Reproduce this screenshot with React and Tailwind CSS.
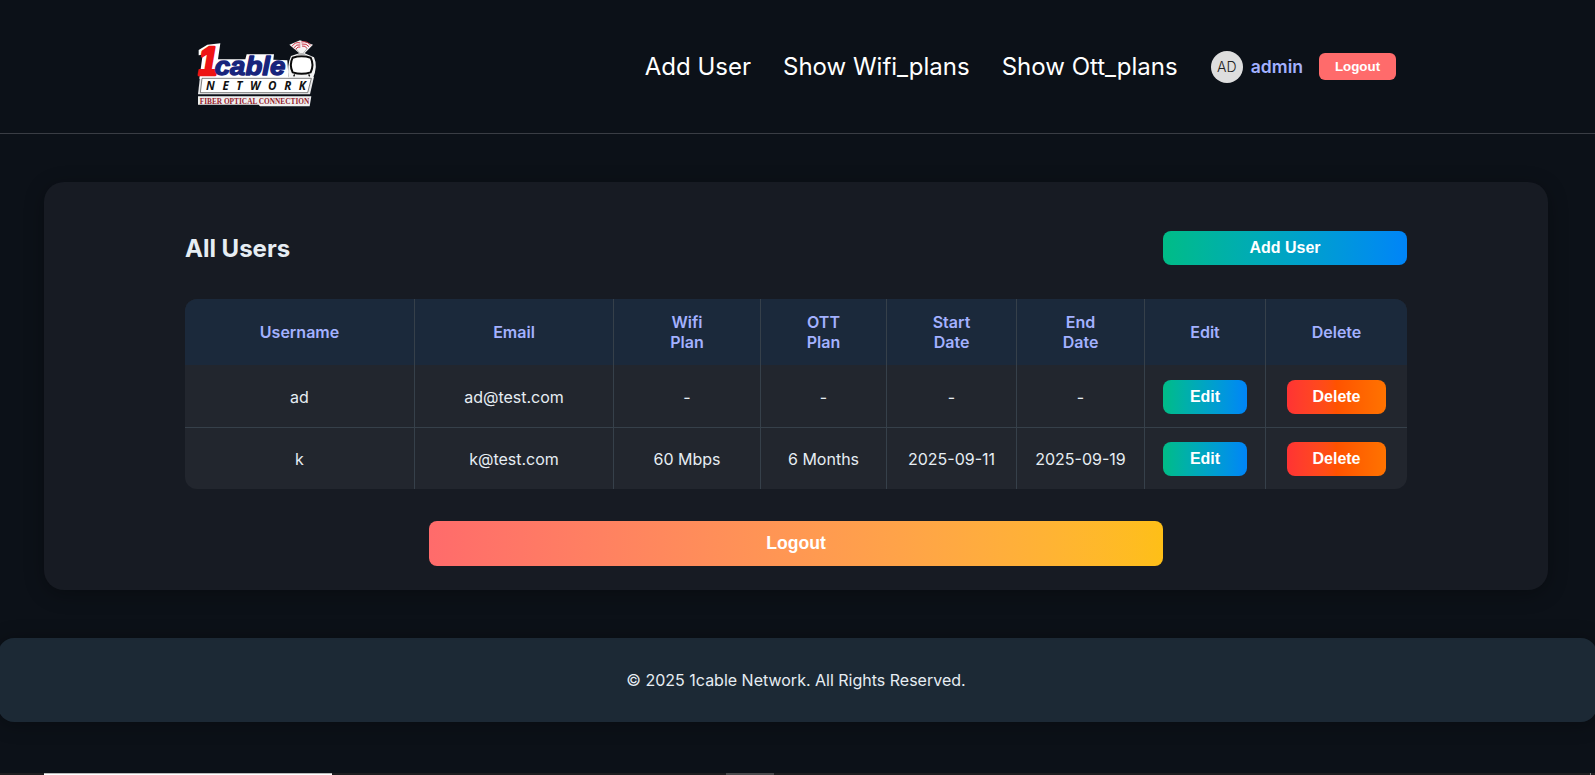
function Logo() {
  return (
    <svg className="block h-[90px] w-[150px] shrink-0" viewBox="0 0 450 270" role="img" aria-label="1cable Network">
      <path d="M60 140 H402 L390 193 H54 Z" fill="#e9e9ea" />
      <path d="M56 60 L82 44 L121 40 L114 88 L196 88 L200 73 L282 73 L280 89 L322 91 L326 146 H58 L68 74 L56 76 Z" fill="#fff" />
      <path d="M333 78 Q320 106 326 146 H398 Q415 110 402 82 L374 70 L399 44 L360 31 L328 44 L358 70 Z" fill="#f4f4f4" />
      <path d="M54 199 H394 L389 229 H240 L236 224 H54 Z" fill="#efefef" />
      <path d="M66 145 H394 L383 188 H61 Z" fill="#fff" stroke="#444" strokeWidth="2" />
      <g fontFamily="Liberation Sans, Arial, sans-serif" fontStyle="italic" fontWeight="700" strokeLinejoin="round">
        <text x="54" y="136" fontSize="121" textLength="60" lengthAdjust="spacingAndGlyphs" fill="#ee1414" stroke="#ee1414" strokeWidth="8">1</text>
        <text x="104" y="136" fontSize="78" textLength="212" lengthAdjust="spacingAndGlyphs" fill="#18247c" stroke="#18247c" strokeWidth="4">cable</text>
      </g>
      <text x="78" y="180" fontFamily="Open Sans, sans-serif" fontStyle="italic" fontWeight="700" fontSize="35" textLength="300" fill="#111">NETWORK</text>
      <text x="59" y="221" fontFamily="Liberation Serif, serif" fontWeight="700" fontSize="23" textLength="329" lengthAdjust="spacingAndGlyphs" fill="#96202b">FIBER OPTICAL CONNECTION</text>
      <path d="M338 83 Q365 75 392 83 Q403 105 392 127 Q365 136 338 127 Q327 105 338 83 Z" fill="#fff" stroke="#0a0a0a" strokeWidth="6" />
      <path d="M344 133 l-3 6 M386 133 l3 6" stroke="#111" strokeWidth="4" />
      <path d="M363 74 L347 56 M366 74 L383 54" stroke="#999" strokeWidth="2" />
      <path d="M350 76 Q364 62 379 76 Z" fill="#b5b5b5" />
      <path d="M336 49 Q346 34 361 39 M341 54 Q350 41 361 45 M347 58 Q354 48 361 51 M364 36 Q382 32 392 46 M365 42 Q380 40 387 50 M366 48 Q376 47 381 55" fill="none" stroke="#cf3344" strokeWidth="3" />
    </svg>
  );
}

const users = [
  ["ad", "ad@test.com", "-", "-", "-", "-"],
  ["k", "k@test.com", "60 Mbps", "6 Months", "2025-09-11", "2025-09-19"],
];
const headings = ["Username", "Email", "Wifi Plan", "OTT Plan", "Start Date", "End Date", "Edit", "Delete"];
const columns = "grid grid-cols-[230px_199px_147px_126px_130px_128px_121px_141px]";
const cell = "flex items-center justify-center border-r border-[#36404a] last:border-r-0";
const gradientButton = "block h-[34px] rounded-lg font-['Liberation_Sans',sans-serif] text-base font-bold leading-none text-white";

export default function App() {
  return (
    <div className="flex h-[775px] w-full flex-col overflow-hidden bg-[#0c1118] font-[Inter,sans-serif] text-base text-[#e6edf3]">
      <header className="flex h-[134px] shrink-0 items-start border-b border-[#3a3d44] pl-[180px] pr-[199px] pt-[30px]">
        <Logo />
        <div className="ml-auto flex h-[74px] items-center">
          <nav className="flex gap-8 text-2xl text-white">
            <a>Add User</a>
            <a>Show Wifi_plans</a>
            <a>Show Ott_plans</a>
          </nav>
          <span className="ml-[33px] flex size-8 items-center justify-center rounded-full bg-[#dedede] text-sm font-light text-[#222]">AD</span>
          <span className="ml-2 text-[17.6px] font-semibold text-[#a3b1ff]">admin</span>
          <button className="mb-px ml-4 h-[27px] w-[77px] rounded-md bg-[#ff6b6b] font-['Liberation_Sans',sans-serif] text-[13.33px] font-bold text-white">Logout</button>
        </div>
      </header>

      <main className="ml-11 mr-[47px] mt-12 flex h-[408px] shrink-0 flex-col rounded-[20px] bg-[#171b23] pl-[141px] pr-[141px] pt-[49px] shadow-[0_4px_20px_rgba(0,0,0,0.3)]">
        <div className="flex h-[34px] items-center justify-between">
          <h1 className="pt-0.5 text-2xl font-bold">All Users</h1>
          <button className={`${gradientButton} w-[244px] bg-linear-to-r from-[#00bc86] to-[#0084f8]`}>Add User</button>
        </div>

        <div className="mt-[34px] overflow-hidden rounded-xl bg-[#22262e]">
          <div className={`${columns} h-[66px] bg-[#1b293b] text-center font-semibold leading-5 text-[#a3b1ff]`}>
            {headings.map((h) => (
              <div key={h} className={cell}>
                <span className="w-min">{h}</span>
              </div>
            ))}
          </div>
          {users.map((row) => (
            <div key={row[0]} className={`${columns} h-[62px] border-[#36404a] last:border-t nth-2:*:pt-0.5`}>
              {row.map((value, i) => (
                <div key={i} className={cell}>{value}</div>
              ))}
              <div className={cell}>
                <button className={`${gradientButton} w-[84px] bg-linear-to-r from-[#00bc86] to-[#0084f8]`}>Edit</button>
              </div>
              <div className={cell}>
                <button className={`${gradientButton} w-[99px] bg-linear-to-r from-[#ff3333] via-[#ff5200] to-[#ff7300]`}>Delete</button>
              </div>
            </div>
          ))}
        </div>

        <button className="mx-auto mt-8 h-[45px] w-[734px] rounded-lg bg-linear-to-r from-[#ff6b6b] to-[#febf17] font-['Liberation_Sans',sans-serif] text-[17.6px] font-bold text-white">Logout</button>
      </main>

      <footer className="-mx-0.5 mt-12 flex h-[84px] shrink-0 items-center justify-center rounded-2xl bg-[#1c2935] pr-[3px] shadow-[0_2px_20px_rgba(0,0,0,0.3)]">
        © 2025 1cable Network. All Rights Reserved.
      </footer>

      <div className="mt-auto flex h-0.5 shrink-0 bg-[#1d1d1f]">
        <div className="ml-11 w-72 border-t border-[#bbb] bg-white" />
        <div className="ml-[394px] w-12 bg-[#4a4a4c]" />
        <div className="ml-auto mr-1 w-px bg-[#888]" />
      </div>
    </div>
  );
}
